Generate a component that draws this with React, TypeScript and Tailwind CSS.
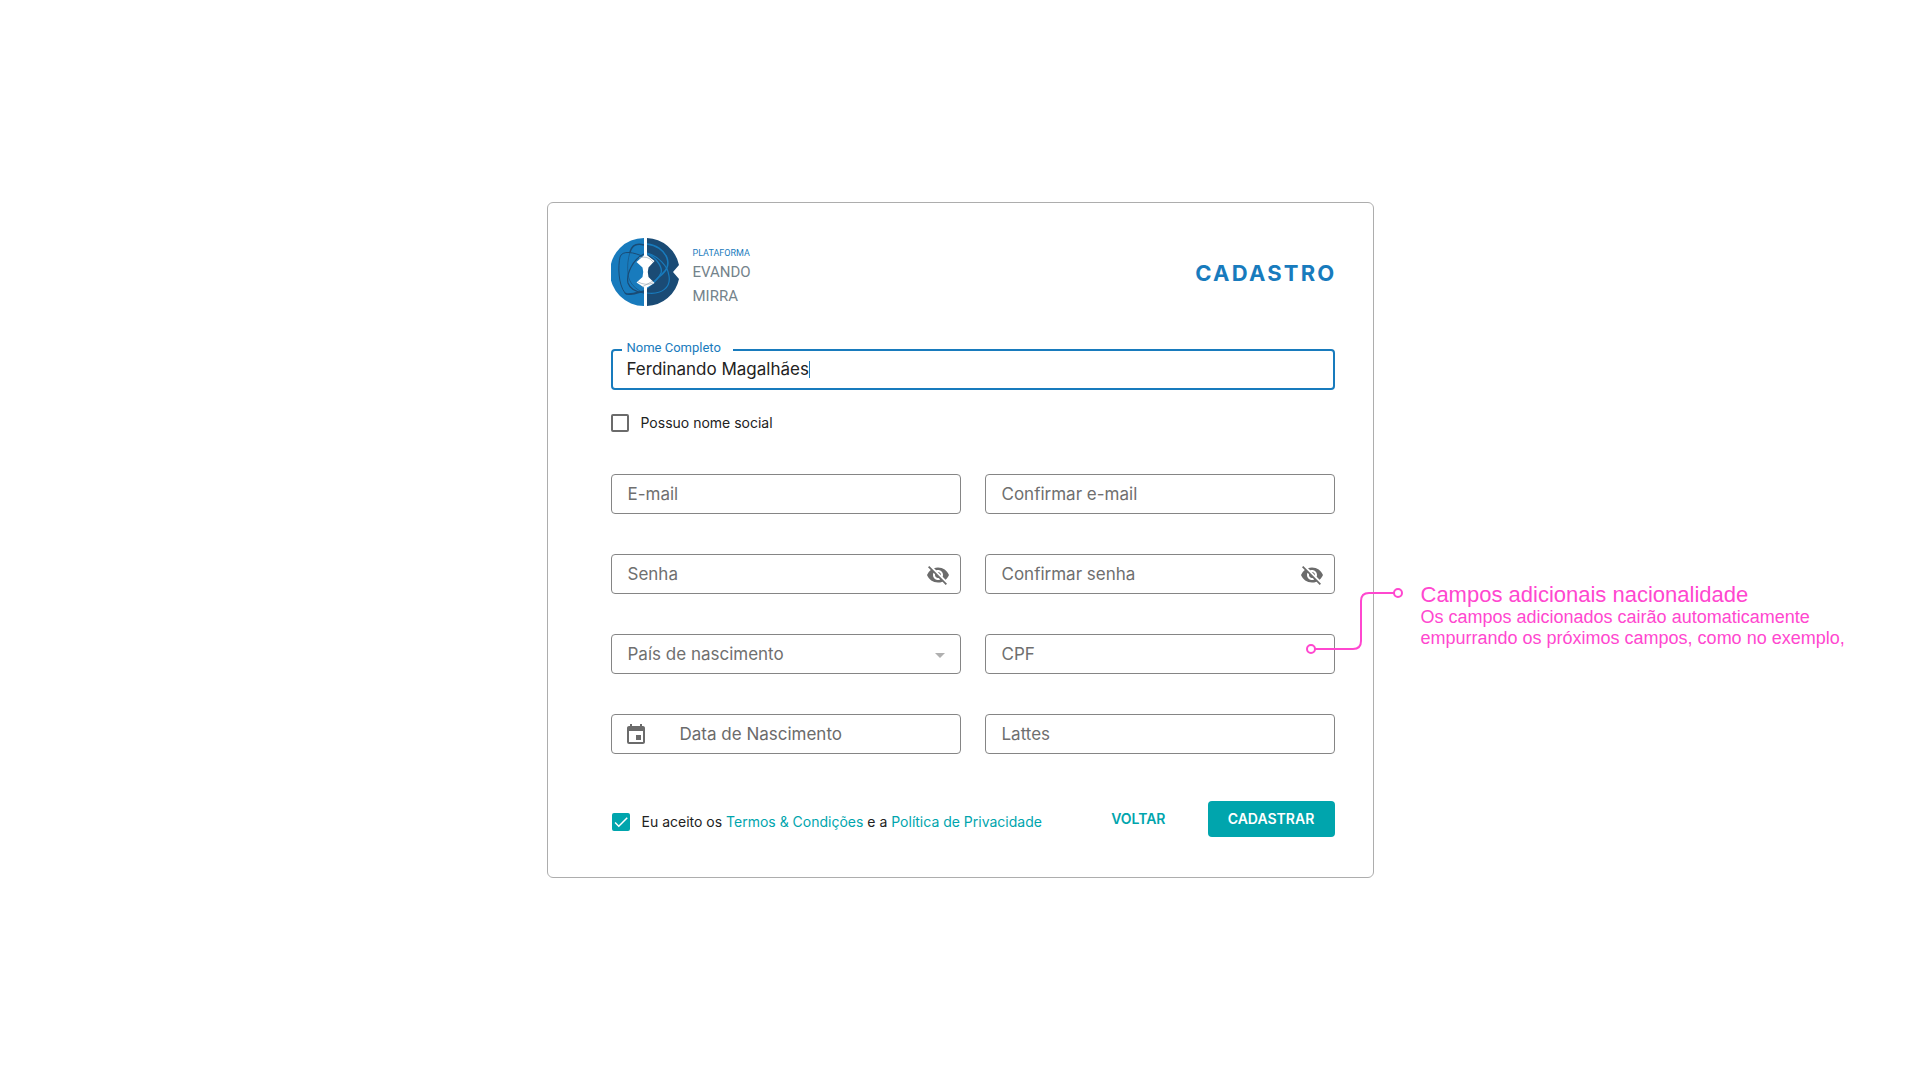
import { useState } from "react";
import { MdCheck, MdEvent, MdVisibilityOff, MdArrowDropDown } from "react-icons/md";

const boxClass =
  "flex h-10 w-full items-center rounded border border-[#858585] px-4 pt-px text-[17px] text-[#6b6b6b]";
const inputClass =
  "min-w-0 flex-1 bg-transparent text-[17px] outline-none placeholder:text-[#6f6f6f]";

function Logo() {
  return (
    <div className="flex items-start gap-[14px]">
      <svg viewBox="0 0 68 68" className="size-[68px]" aria-hidden="true">
        <path d="M33 0A34 34 0 0 0 33 68Z" fill="#187bbd" />
        <path d="M36 0A34 34 0 0 1 68 27L62 34L68 41A34 34 0 0 1 36 68Z" fill="#1a4b75" />
        <g fill="none" stroke="#1a4b75">
          <path d="M33 7C26 5 21 7 19 14" strokeWidth="1.6" />
          <path d="M19 14C17 21 16 28 17 36C18 45 24 51 33 55" strokeWidth="0.6" />
          <path d="M33 19C23 14 11 12 9 19C7 28 7 46 14 55" strokeWidth="1" />
          <path d="M14 55C17 58 25 55 33 53" strokeWidth="1.7" />
          <path d="M33 16C22 21 15 36 17 45C19 51 25 54 33 55" strokeWidth="1.2" />
        </g>
        <g fill="none" stroke="#187bbd">
          <path d="M36 6C45 7 53 12 56 20C59 29 54 34 48 39C44 43 40 47 36 50" strokeWidth="1.6" />
          <path d="M36 16C44 18 52 29 50 35C47 42 41 46 36 50" strokeWidth="1.3" />
          <path d="M36 15C47 18 57 28 58 38C60 49 51 57 36 55" strokeWidth="1.2" />
        </g>
        <path
          d="M34.5 16L43.5 23L37.5 29.5Q36 34 37.5 39L43.5 45L34.5 50.5L25.5 44.5L31.5 39Q33 34 31.5 29.5L25.5 24Z"
          fill="#fff"
        />
        <path d="M33 0H36V68H33Z" fill="#fff" />
        <path d="M28 20Q37 17 42 24M27 44Q35 48 42 45M31 49L42 43" fill="none" stroke="#9cabb5" strokeWidth="0.7" />
      </svg>
      <div className="flex flex-col pt-2 font-[Roboto,sans-serif] whitespace-nowrap">
        <span className="text-[9px] leading-[14px] text-[#187bbd]">PLATAFORMA</span>
        <span className="text-[15px] leading-6 text-[#74838b]">EVANDO</span>
        <span className="text-[15px] leading-6 text-[#74838b]">MIRRA</span>
      </div>
    </div>
  );
}

function TextField({ label, type = "text" }: { label: string; type?: string }) {
  return (
    <div className={boxClass}>
      <input type={type} aria-label={label} placeholder={label} className={inputClass} />
    </div>
  );
}

function PasswordField({ label }: { label: string }) {
  const [visible, setVisible] = useState(false);
  return (
    <div className={boxClass}>
      <input
        type={visible ? "text" : "password"}
        aria-label={label}
        placeholder={label}
        className={inputClass}
      />
      <button
        type="button"
        aria-label="Mostrar senha"
        onClick={() => setVisible(!visible)}
        className="-mr-1.5 text-[#6b6b6b]"
      >
        <MdVisibilityOff className="size-6" />
      </button>
    </div>
  );
}

function Callout() {
  return (
    <div className="absolute top-[-52px] left-full -ml-8 flex w-[540px] items-start text-[#ff47cf]">
      <svg
        viewBox="0 0 100 74"
        className="h-[74px] w-[100px] shrink-0"
        fill="none"
        stroke="currentColor"
        strokeWidth="2"
        aria-hidden="true"
      >
        <circle cx="8" cy="67" r="4" />
        <path d="M12 67H50Q58 67 58 59V19Q58 11 66 11H91" />
        <circle cx="95" cy="11" r="4" />
      </svg>
      <div className="ml-[18px] font-['Liberation_Sans',Arial,sans-serif] whitespace-nowrap">
        <p className="text-[22px] leading-[25px]">Campos adicionais nacionalidade</p>
        <p className="text-[18px] leading-[21px]">
          Os campos adicionados cairão automaticamente
          <br />
          empurrando os próximos campos, como no exemplo,
        </p>
      </div>
    </div>
  );
}

export default function App() {
  const [name, setName] = useState("Ferdinando Magalhães");
  const [social, setSocial] = useState(false);
  const [accepted, setAccepted] = useState(true);

  return (
    <main className="flex min-h-screen items-center justify-center overflow-x-hidden bg-white font-[Inter,sans-serif]">
      <form
        onSubmit={(e) => e.preventDefault()}
        className="w-full max-w-[827px] rounded-md border border-[#adadad] pt-9 pr-[38px] pb-10 pl-[63px]"
      >
        <header className="flex h-[68px] items-center justify-between">
          <Logo />
          <h1 className="-mr-0.5 text-[22px] font-bold tracking-widest text-[#187bbd]">CADASTRO</h1>
        </header>

        <div className="relative mt-[42px] flex h-[41px] items-center rounded border-2 border-[#187bbd] px-[14px]">
          <label
            htmlFor="nome"
            className="absolute -top-[11px] left-[9px] bg-white pr-3 pl-[5px] font-[Roboto,sans-serif] text-[13px] leading-4 text-[#187bbd]"
          >
            Nome Completo
          </label>
          <input
            id="nome"
            value={name}
            onChange={(e) => setName(e.target.value)}
            className="field-sizing-content bg-transparent text-[17px] text-[#222] outline-none"
          />
          <span className="h-[17px] w-px bg-[#187bbd]" />
        </div>

        <label className="mt-6 flex w-fit items-center gap-3 text-sm leading-[18px] text-[#222]">
          <input
            type="checkbox"
            checked={social}
            onChange={(e) => setSocial(e.target.checked)}
            className="size-[18px] appearance-none rounded-xs border-2 border-[#6b6b6b] checked:bg-[#00a5ad]"
          />
          Possuo nome social
        </label>

        <div className="mt-[42px] grid grid-cols-2 gap-x-6 gap-y-10">
          <TextField label="E-mail" type="email" />
          <TextField label="Confirmar e-mail" type="email" />
          <PasswordField label="Senha" />
          <PasswordField label="Confirmar senha" />
          <div className={boxClass}>
            <select
              aria-label="País de nascimento"
              className="min-w-0 flex-1 appearance-none bg-transparent text-[17px] text-[#6f6f6f] outline-none"
            >
              <option>País de nascimento</option>
            </select>
            <MdArrowDropDown className="-mr-2 size-6 text-[#b0b0b0]" />
          </div>
          <div className="relative">
            <TextField label="CPF" />
            <Callout />
          </div>
          <div className={boxClass}>
            <MdEvent className="-ml-1 size-6 shrink-0" />
            <input
              type="text"
              aria-label="Data de Nascimento"
              placeholder="Data de Nascimento"
              className="ml-8 min-w-0 flex-1 bg-transparent text-[17px] outline-none placeholder:text-[#6b6b6b]"
            />
          </div>
          <TextField label="Lattes" />
        </div>

        <footer className="mt-[47px] flex items-center">
          <div className="flex items-center gap-3 pt-1.5 text-sm text-[#222]">
            <span className="relative ml-px size-[18px]">
              <input
                id="aceite"
                type="checkbox"
                checked={accepted}
                onChange={(e) => setAccepted(e.target.checked)}
                className="block size-[18px] appearance-none rounded-xs border-2 border-[#6b6b6b] checked:border-[#00a5ad] checked:bg-[#00a5ad]"
              />
              <MdCheck className="pointer-events-none absolute inset-0 size-[18px] text-white" />
            </span>
            <label htmlFor="aceite">
              Eu aceito os{" "}
              <a href="#termos" className="text-[#00a5ad]">Termos &amp; Condições</a> e a{" "}
              <a href="#privacidade" className="text-[#00a5ad]">Política de Privacidade</a>
            </label>
          </div>
          <button type="button" className="mr-[42px] ml-auto text-sm font-semibold text-[#00a5ad]">
            VOLTAR
          </button>
          <button
            type="submit"
            className="h-9 w-[127px] rounded bg-[#00a5ad] text-sm font-semibold text-white"
          >
            CADASTRAR
          </button>
        </footer>
      </form>
    </main>
  );
}
